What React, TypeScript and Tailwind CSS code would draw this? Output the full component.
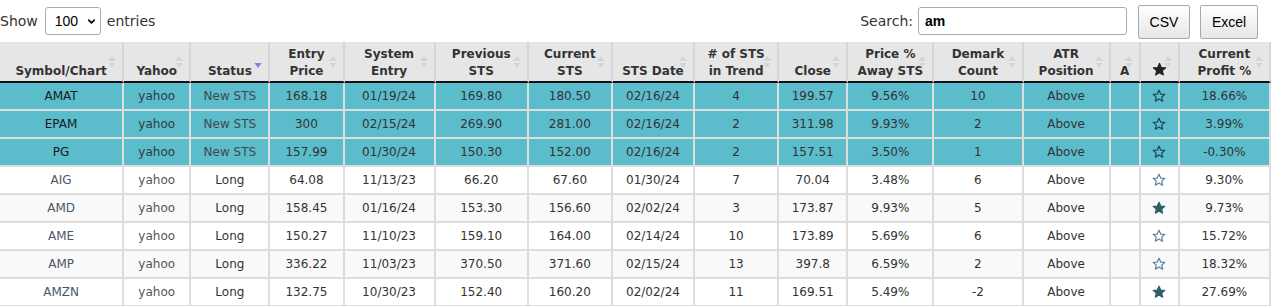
import { ChevronDown } from "lucide-react";

type Row = {
  sym: string;
  status: string;
  entry: string;
  sysEntry: string;
  prev: string;
  cur: string;
  stsDate: string;
  inTrend: string;
  close: string;
  away: string;
  demark: string;
  atr: string;
  fav: boolean;
  profit: string;
  hot?: boolean;
};

const rows: Row[] = [
  { sym: "AMAT", status: "New STS", entry: "168.18", sysEntry: "01/19/24", prev: "169.80", cur: "180.50", stsDate: "02/16/24", inTrend: "4", close: "199.57", away: "9.56%", demark: "10", atr: "Above", fav: false, profit: "18.66%", hot: true },
  { sym: "EPAM", status: "New STS", entry: "300", sysEntry: "02/15/24", prev: "269.90", cur: "281.00", stsDate: "02/16/24", inTrend: "2", close: "311.98", away: "9.93%", demark: "2", atr: "Above", fav: false, profit: "3.99%", hot: true },
  { sym: "PG", status: "New STS", entry: "157.99", sysEntry: "01/30/24", prev: "150.30", cur: "152.00", stsDate: "02/16/24", inTrend: "2", close: "157.51", away: "3.50%", demark: "1", atr: "Above", fav: false, profit: "-0.30%", hot: true },
  { sym: "AIG", status: "Long", entry: "64.08", sysEntry: "11/13/23", prev: "66.20", cur: "67.60", stsDate: "01/30/24", inTrend: "7", close: "70.04", away: "3.48%", demark: "6", atr: "Above", fav: false, profit: "9.30%" },
  { sym: "AMD", status: "Long", entry: "158.45", sysEntry: "01/16/24", prev: "153.30", cur: "156.60", stsDate: "02/02/24", inTrend: "3", close: "173.87", away: "9.93%", demark: "5", atr: "Above", fav: true, profit: "9.73%" },
  { sym: "AME", status: "Long", entry: "150.27", sysEntry: "11/10/23", prev: "159.10", cur: "164.00", stsDate: "02/14/24", inTrend: "10", close: "173.89", away: "5.69%", demark: "6", atr: "Above", fav: false, profit: "15.72%" },
  { sym: "AMP", status: "Long", entry: "336.22", sysEntry: "11/03/23", prev: "370.50", cur: "371.60", stsDate: "02/15/24", inTrend: "13", close: "397.8", away: "6.59%", demark: "2", atr: "Above", fav: false, profit: "18.32%" },
  { sym: "AMZN", status: "Long", entry: "132.75", sysEntry: "10/30/23", prev: "152.40", cur: "160.20", stsDate: "02/02/24", inTrend: "11", close: "169.51", away: "5.49%", demark: "-2", atr: "Above", fav: true, profit: "27.69%" },
];

const STAR = "M7 1.2 L8.7 5.1 L12.8 5.4 L9.7 8.1 L10.6 12.2 L7 10 L3.4 12.2 L4.3 8.1 L1.2 5.4 L5.3 5.1 Z";

function Star({ filled, hot }: { filled: boolean; hot?: boolean }) {
  return (
    <svg viewBox="0 0 14 14" className="mx-auto block h-[14px] w-[14px]">
      <path
        d={STAR}
        fill={filled ? "#2d5f66" : "none"}
        stroke={filled ? "#2d5f66" : hot ? "#1e4257" : "#5a7f9c"}
        strokeWidth="1.2"
        strokeLinejoin="round"
      />
    </svg>
  );
}

function SortIcon({ active }: { active?: boolean }) {
  return (
    <svg viewBox="0 0 8 14" className="absolute right-[6px] top-[13px] h-[14px] w-[8px]">
      {!active && <path d="M0 6 L4 1 L8 6 Z" fill="#d4d4d4" />}
      <path d="M0.5 8 L7.5 8 L4 13 Z" fill={active ? "#8080d8" : "#d4d4d4"} />
    </svg>
  );
}

const headers: { label: React.ReactNode; w: string; active?: boolean }[] = [
  { label: "Symbol/Chart", w: "w-[124px]" },
  { label: "Yahoo", w: "w-[67px]" },
  { label: "Status", w: "w-[79px]", active: true },
  { label: <>Entry<br />Price</>, w: "w-[74px]" },
  { label: <>System<br />Entry</>, w: "w-[91px]" },
  { label: <>Previous<br />STS</>, w: "w-[93px]" },
  { label: <>Current<br />STS</>, w: "w-[84px]" },
  { label: "STS Date", w: "w-[82px]" },
  { label: <># of STS<br />in Trend</>, w: "w-[84px]" },
  { label: "Close", w: "w-[69px]" },
  { label: <>Price %<br />Away STS</>, w: "w-[86px]" },
  { label: <>Demark<br />Count</>, w: "w-[89px]" },
  { label: <>ATR<br />Position</>, w: "w-[87px]" },
  { label: "A", w: "w-[30px]" },
  {
    label: (
      <svg viewBox="0 0 14 14" className="mx-auto mb-[3px] block h-[15px] w-[15px]">
        <path d={STAR} fill="#222" stroke="#222" strokeWidth="1" strokeLinejoin="round" />
      </svg>
    ),
    w: "w-[39px]",
  },
  { label: <>Current<br />Profit %</>, w: "w-[91px]" },
];

export default function App() {
  return (
    <div className="w-[1275px] bg-white font-['DejaVu_Sans',sans-serif] text-[#333]">
      <div className="flex h-[42px] items-start">
        <div className="mt-[7px] flex items-center text-[14px]">
          <span className="leading-[28px]">Show</span>
          <div className="ml-[7px] flex h-[28px] w-[56px] items-center rounded-[3px] border border-[#aaa] bg-white pl-[9px] font-['Liberation_Sans',Arial,sans-serif] text-[14px] text-black">
            <span>100</span>
            <ChevronDown size={11} strokeWidth={3.5} className="ml-[8px]" />
          </div>
          <span className="ml-[6px] leading-[28px]">entries</span>
        </div>
        <div className="ml-auto mr-[17px] flex items-start">
          <label className="mt-[7px] text-[14px] leading-[28px]">Search:</label>
          <div className="ml-[5px] mt-[7px] flex h-[28px] w-[209px] items-center rounded-[3px] border border-[#aaa] pl-[6px] font-['Liberation_Sans',Arial,sans-serif] text-[14px] font-bold text-black">
            am
          </div>
          <button className="ml-[11px] mt-[5px] h-[34px] w-[52px] rounded-[2px] border border-[#a9a9a9] bg-gradient-to-b from-white to-[#e6e6e6] font-['Liberation_Sans',Arial,sans-serif] text-[14px] text-black">
            CSV
          </button>
          <button className="ml-[10px] mt-[5px] h-[34px] w-[58px] rounded-[2px] border border-[#a9a9a9] bg-gradient-to-b from-white to-[#e6e6e6] font-['Liberation_Sans',Arial,sans-serif] text-[14px] text-black">
            Excel
          </button>
        </div>
      </div>

      <table className="w-[1271px] table-fixed border-separate border-spacing-0 text-[12px]">
        <colgroup>
          {headers.map((h, i) => (
            <col key={i} className={h.w} />
          ))}
        </colgroup>
        <thead>
          <tr>
            {headers.map((h, i) => (
              <th
                key={i}
                className="relative h-[41px] border-r-2 border-b-2 border-r-[#d6d6d6] border-b-[#111] bg-[#e6e6e6] px-[2px] pb-[1px] pt-0 align-bottom text-[12px] font-bold leading-[17px] text-[#333]"
              >
                {h.label}
                <SortIcon active={h.active} />
              </th>
            ))}
          </tr>
        </thead>
        <tbody>
          {rows.map((r, i) => {
            const bg = r.hot ? "bg-[#5bbccc]" : i % 2 === 0 ? "bg-[#f9f9f9]" : "bg-white";
            const cells: React.ReactNode[] = [
              r.sym,
              "yahoo",
              r.status,
              r.entry,
              r.sysEntry,
              r.prev,
              r.cur,
              r.stsDate,
              r.inTrend,
              r.close,
              r.away,
              r.demark,
              r.atr,
              "",
              <Star filled={r.fav} hot={r.hot} />,
              r.profit,
            ];
            return (
              <tr key={r.sym} className={bg}>
                {cells.map((c, j) => {
                  let color = "text-[#333]";
                  if (j === 0) color = r.hot ? "text-[#1a1a1a]" : "text-[#4a5866]";
                  if (j === 1) color = r.hot ? "text-[#2f3a3c]" : "text-[#555]";
                  if (j === 2 && r.hot) color = "text-[#3d4a4d]";
                  return (
                    <td
                      key={j}
                      className={`h-[28px] border-r-2 border-b-2 border-[#ddd] p-0 text-center align-middle font-normal leading-[26px] ${color}`}
                    >
                      {c}
                    </td>
                  );
                })}
              </tr>
            );
          })}
        </tbody>
      </table>
    </div>
  );
}
